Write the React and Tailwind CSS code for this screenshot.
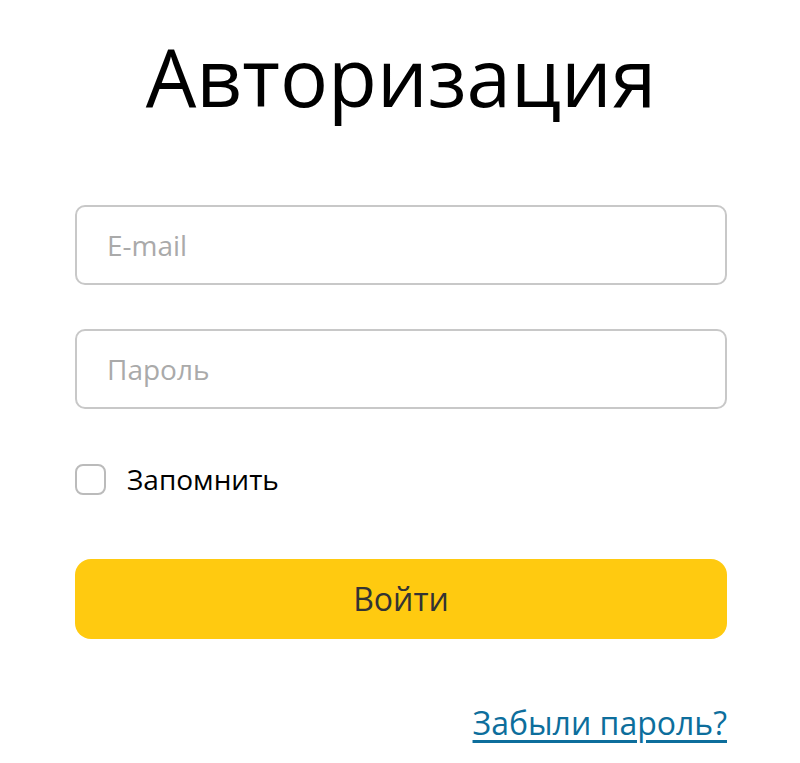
import React, { useState } from 'react';

const App = () => {
    const [remember, setRemember] = useState(false);

    return (
        <div className="min-h-[763px] bg-white pl-[75px] pr-[73px]" style={{ fontFamily: '"Open Sans", sans-serif' }}>
            {/* Title */}
            <h1 className="pt-[22px] text-center text-[80px] leading-[108px] text-black">Авторизация</h1>

            {/* Form */}
            <form className="mt-[75px]" onSubmit={(e) => e.preventDefault()}>
                <input
                    type="email"
                    placeholder="E-mail"
                    className="block h-[80px] w-full rounded-[10px] border-2 border-[#c8c8c8] px-[30px] text-[28px] text-black outline-none placeholder:text-[#aaaaaa]"
                />
                <input
                    type="password"
                    placeholder="Пароль"
                    className="mt-[44px] block h-[80px] w-full rounded-[10px] border-2 border-[#c8c8c8] px-[30px] text-[28px] text-black outline-none placeholder:text-[#aaaaaa]"
                />

                <label className="mt-[54px] flex cursor-pointer items-center gap-[21px]">
                    <input
                        type="checkbox"
                        checked={remember}
                        onChange={() => setRemember(!remember)}
                        className="h-[31px] w-[31px] appearance-none rounded-[8px] border-2 border-[#bbbbbb] bg-white checked:bg-[#ffca10]"
                    />
                    <span className="text-[28px] leading-[32px] text-black">Запомнить</span>
                </label>

                <button
                    type="submit"
                    className="mt-[64px] block h-[80px] w-full rounded-[16px] bg-[#ffca10] text-[32px] text-[#333333]"
                >
                    Войти
                </button>

                <div className="mt-[62px] flex justify-end">
                    <a href="#" className="text-[32px] leading-[44px] text-[#0d6e9c] underline underline-offset-[5px]">
                        Забыли пароль?
                    </a>
                </div>
            </form>
        </div>
    );
};

export default App;
